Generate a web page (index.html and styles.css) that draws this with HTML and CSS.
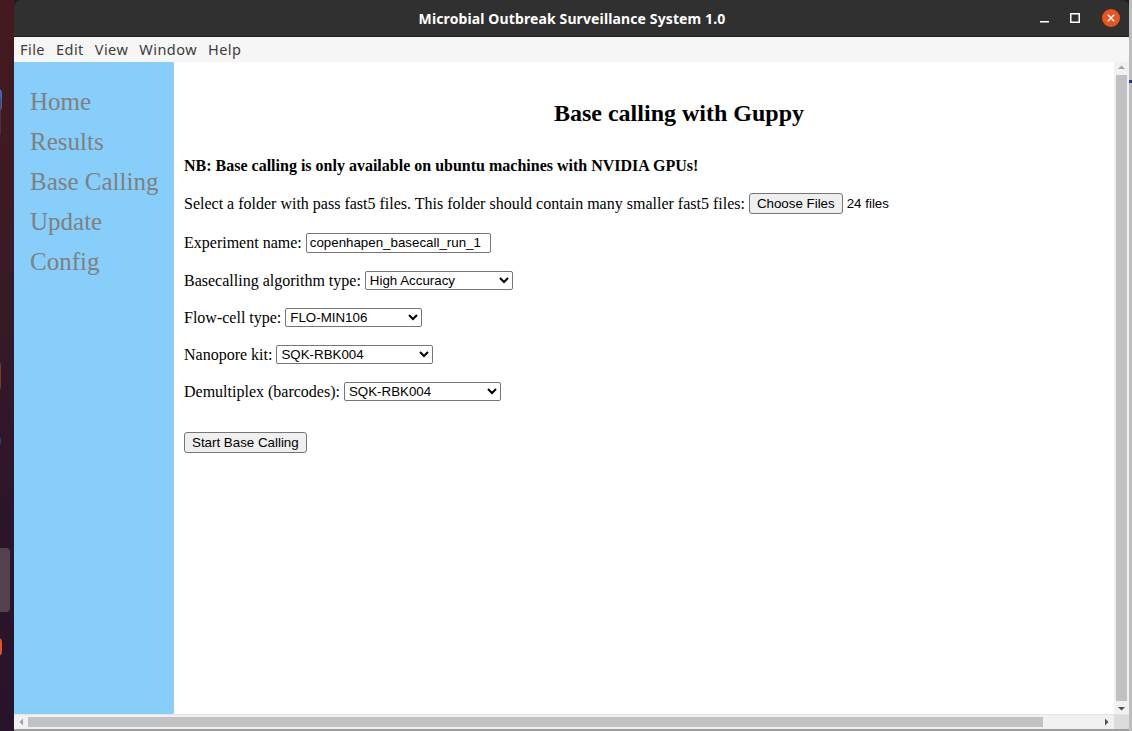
FILE: index.html
```html
<!DOCTYPE html>
<html>
<head>
<meta charset="utf-8">
<title>Microbial Outbreak Surveillance System 1.0</title>
<link rel="stylesheet" href="styles.css">
</head>
<body>
<div class="desktop">
  <span class="dock dock-blue"></span>
  <span class="dock dock-olive"></span>
  <span class="dock dock-orange"></span>
  <span class="dock dock-blue2"></span>
  <span class="dock dock-dark"></span>
  <span class="dock dock-active"></span>
  <span class="dock dock-orange2"></span>
</div>
<div class="window">
  <div class="titlebar">
    <div class="title">Microbial Outbreak Surveillance System 1.0</div>
    <div class="wm-buttons">
      <svg class="wm-min" width="12" height="12" viewBox="0 0 12 12"><rect x="1" y="9" width="9" height="1.5" fill="#fff"/></svg>
      <svg class="wm-max" width="12" height="12" viewBox="0 0 12 12"><rect x="1.75" y="1.75" width="8.5" height="8.5" fill="none" stroke="#fff" stroke-width="1.5"/></svg>
      <svg class="wm-close" width="18" height="18" viewBox="0 0 18 18"><circle cx="9" cy="9" r="9" fill="#e95420"/><path d="M5.8 5.8 L12.2 12.2 M12.2 5.8 L5.8 12.2" stroke="#fff" stroke-width="1.5"/></svg>
    </div>
  </div>
  <div class="menubar">
    <span>File</span><span>Edit</span><span>View</span><span>Window</span><span>Help</span>
  </div>
  <div class="client">
    <nav class="sidebar">
      <a>Home</a>
      <a>Results</a>
      <a>Base Calling</a>
      <a>Update</a>
      <a>Config</a>
    </nav>
    <main class="main">
      <div class="content">
        <h2 class="heading">Base calling with Guppy</h2>
        <div class="row nb"><b>NB: Base calling is only available on ubuntu machines with NVIDIA GPUs!</b></div>
        <div class="row r-select"><span>Select a folder with pass fast5 files. This folder should contain many smaller fast5 files:</span><button class="btn">Choose Files</button><span class="files">24 files</span></div>
        <div class="row r-exp"><span>Experiment name:</span><input class="txt" type="text" value="copenhapen_basecall_run_1"></div>
        <div class="row r-base"><span>Basecalling algorithm type:</span><select class="sel w148"><option>High Accuracy</option></select></div>
        <div class="row r-std"><span>Flow-cell type:</span><select class="sel w137"><option>FLO-MIN106</option></select></div>
        <div class="row r-std"><span>Nanopore kit:</span><select class="sel w157"><option>SQK-RBK004</option></select></div>
        <div class="row r-std"><span>Demultiplex (barcodes):</span><select class="sel w157"><option>SQK-RBK004</option></select></div>
        <div class="row r-start"><button class="btn">Start Base Calling</button></div>
      </div>
    </main>
    <div class="vscroll">
      <svg class="arrow" width="15" height="10" viewBox="0 0 15 10"><path d="M4 7 L11 7 L7.5 3.5 Z" fill="#a3a3a3"/></svg>
      <div class="vthumb"></div>
      <svg class="arrow" width="15" height="10" viewBox="0 0 15 10"><path d="M4 3 L11 3 L7.5 6.5 Z" fill="#505050"/></svg>
    </div>
  </div>
  <div class="hbar">
    <div class="hscroll">
      <svg class="harrow" width="10" height="14" viewBox="0 0 10 14"><path d="M7 3.5 L7 10.5 L3.5 7 Z" fill="#a3a3a3"/></svg>
      <div class="htrack"><div class="hthumb"></div></div>
      <svg class="harrow" width="10" height="14" viewBox="0 0 10 14"><path d="M3 3.5 L3 10.5 L6.5 7 Z" fill="#505050"/></svg>
    </div>
    <div class="corner"></div>
  </div>
  <div class="bottomline"></div>
</div>
<div class="rightedge"><span class="rblue"></span></div>
</body>
</html>
```
FILE: styles.css
```css
html, body {
  margin: 0;
  padding: 0;
}
body {
  width: 1132px;
  height: 731px;
  overflow: hidden;
  display: flex;
  background: #2a1428;
  font-family: "Liberation Serif", serif;
}
.desktop {
  width: 14px;
  flex: none;
  position: relative;
  background: linear-gradient(180deg, #45191f 0%, #3a1a27 35%, #2d1529 70%, #27132a 100%);
}
.dock {
  position: absolute;
  display: block;
}
.dock-blue { left: -8px; top: 88px; width: 10px; height: 24px; border-radius: 5px; background: #3d63c5; }
.dock-olive { left: -8px; top: 96px; width: 9px; height: 40px; background: #4a4634; border-radius: 3px; opacity: .7; }
.dock-orange { left: -6px; top: 362px; width: 7px; height: 28px; background: #7b3a1f; border-radius: 3px; }
.dock-blue2 { left: -6px; top: 437px; width: 7px; height: 8px; background: #1d4d7f; border-radius: 3px; }
.dock-dark { left: -6px; top: 497px; width: 7px; height: 32px; background: #1e1a1e; border-radius: 3px; }
.dock-active { left: -4px; top: 548px; width: 14px; height: 64px; background: #54424f; border-radius: 4px; }
.dock-orange2 { left: -6px; top: 638px; width: 8px; height: 18px; background: #e4531d; border-radius: 4px; }

.window {
  width: 1115px;
  flex: none;
  display: flex;
  flex-direction: column;
}
.titlebar {
  height: 36px;
  background: #303030;
  border-radius: 7px 7px 0 0;
  border-bottom: 1px solid #1e1e1e;
  position: relative;
  display: flex;
  align-items: center;
  justify-content: center;
}
.title {
  color: #ffffff;
  font-family: "Noto Sans", "DejaVu Sans", sans-serif;
  font-weight: 700;
  font-size: 14px;
  letter-spacing: 0.12px;
  margin-left: 1px;
  margin-top: 1px;
}
.wm-buttons {
  position: absolute;
  right: 9px;
  top: 9px;
  display: flex;
  align-items: center;
  gap: 18px;
}
.wm-max { margin-right: 3px; }

.menubar {
  height: 25px;
  background: #f6f6f6;
  display: flex;
  align-items: center;
  padding-left: 6px;
  gap: 11px;
  font-family: "Noto Sans", "DejaVu Sans", sans-serif;
  font-size: 14.5px;
  letter-spacing: 0.45px;
  color: #3c3c3c;
}

.client {
  height: 653px;
  display: flex;
}
.sidebar {
  width: 160px;
  flex: none;
  background: #87cefa;
  display: flex;
  flex-direction: column;
  padding-top: 20px;
  padding-left: 16px;
  box-sizing: border-box;
}
.sidebar a {
  font-family: "Liberation Serif", serif;
  font-size: 25px;
  line-height: 40px;
  color: #808080;
  text-decoration: none;
}
.main {
  width: 940px;
  flex: none;
  background: #ffffff;
  overflow: hidden;
}
.content {
  width: 990px;
  padding: 37px 0 0 10px;
  display: flex;
  flex-direction: column;
  font-size: 16px;
  color: #000;
}
.heading {
  margin: 0;
  height: 28px;
  line-height: 28px;
  font-size: 24px;
  font-weight: 700;
  text-align: center;
}
.row {
  height: 22px;
  display: flex;
  align-items: center;
  gap: 4px;
  white-space: nowrap;
}
.nb { margin-top: 28px; }
.r-select { margin-top: 16px; }
.r-exp { margin-top: 17px; }
.r-base { margin-top: 16px; }
.r-std { margin-top: 15px; }
.r-start { margin-top: 29px; }

.btn {
  font-family: "Liberation Sans", Arial, sans-serif;
  font-size: 13.33px;
  height: 21px;
  padding: 1px 7px;
  background: #efefef;
  border: 1px solid #767676;
  border-radius: 3px;
  color: #000;
  box-sizing: border-box;
}
.files {
  font-family: "Liberation Sans", Arial, sans-serif;
  font-size: 13.33px;
}
.txt {
  font-family: "Liberation Sans", Arial, sans-serif;
  font-size: 13.33px;
  width: 185px;
  height: 20px;
  box-sizing: border-box;
  padding: 1px 3px;
  border: 1px solid #767676;
  border-radius: 2px;
  margin: 0;
  color: #000;
}
.sel {
  font-family: "Liberation Sans", Arial, sans-serif;
  font-size: 13.33px;
  height: 19px;
  box-sizing: border-box;
  border: 1px solid #767676;
  border-radius: 2px;
  background: #fff;
  color: #000;
  margin: 0;
  padding: 0;
}
.w148 { width: 148px; }
.w137 { width: 137px; }
.w157 { width: 157px; }

.vscroll {
  width: 15px;
  flex: none;
  background: #f1f1f1;
  display: flex;
  flex-direction: column;
  align-items: center;
}
.arrow { flex: none; display: block; }
.vthumb {
  width: 11px;
  margin: 3px 0;
  flex: 1;
  background: #c1c1c1;
}
.hbar {
  height: 14px;
  display: flex;
  border-top: 1px solid #e4e4e4;
}
.hscroll {
  width: 1100px;
  flex: none;
  display: flex;
  align-items: center;
  background: #f1f1f1;
}
.harrow { flex: none; display: block; margin: 0 2px; }
.htrack {
  flex: 1;
  height: 10px;
}
.hthumb {
  width: 1015px;
  height: 10px;
  background: #c1c1c1;
}
.corner {
  width: 15px;
  background: #dcdcdc;
}
.bottomline {
  height: 2px;
  background: #9c9c9c;
}
.rightedge {
  width: 3px;
  flex: none;
  background: #bdbdbd;
  position: relative;
}
.rblue {
  position: absolute;
  left: 0;
  top: 80px;
  width: 3px;
  height: 3px;
  background: #2a3a8a;
}
```
